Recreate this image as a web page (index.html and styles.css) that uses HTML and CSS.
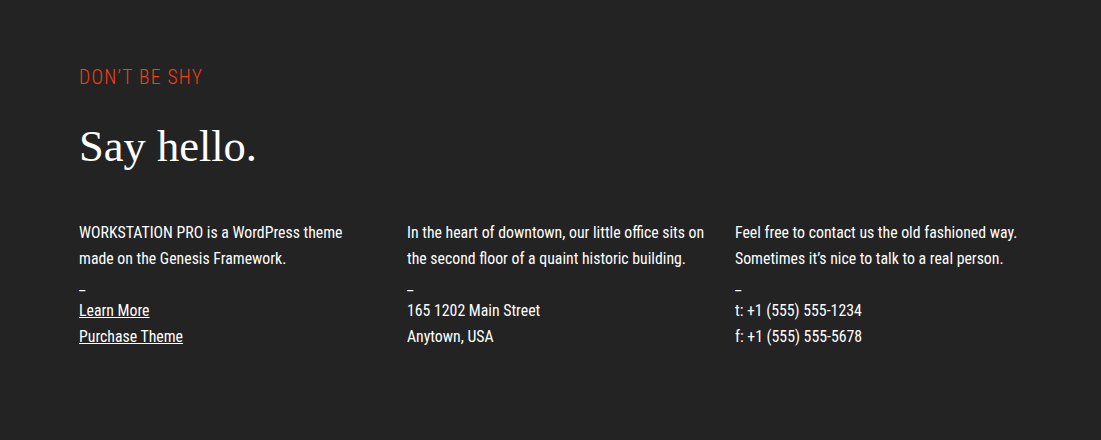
FILE: index.html
```html
<!DOCTYPE html>
<html lang="en">
<head>
<meta charset="utf-8">
<title>Say hello</title>
<link rel="stylesheet" href="styles.css">
</head>
<body>
<section class="contact">
  <p class="eyebrow">Don’t be shy</p>
  <h2 class="title">Say hello.</h2>
  <div class="cols">
    <div class="col">
      <p>WORKSTATION PRO is a WordPress theme made on the Genesis Framework.</p>
      <p>_</p>
      <p><a href="#">Learn More</a><br><a href="#">Purchase Theme</a></p>
    </div>
    <div class="col">
      <p>In the heart of downtown, our little office sits on the second floor of a quaint historic building.</p>
      <p>_</p>
      <p>165 1202 Main Street<br>Anytown, USA</p>
    </div>
    <div class="col">
      <p>Feel free to contact us the old fashioned way. Sometimes it’s nice to talk to a real person.</p>
      <p>_</p>
      <p>t: +1 (555) 555-1234<br>f: +1 (555) 555-5678</p>
    </div>
  </div>
</section>
</body>
</html>
```
FILE: styles.css
```css
html, body {
  margin: 0;
  padding: 0;
  background: #232323;
}
body {
  width: 1101px;
  height: 440px;
  overflow: hidden;
}
.contact {
  padding: 66px 0 0 79px;
  color: #ffffff;
  font-family: "Roboto Condensed", Roboto, "Liberation Sans", sans-serif;
  font-stretch: condensed;
}
.eyebrow {
  margin: 0;
  font-size: 19.5px;
  font-weight: 300;
  line-height: 24px;
  letter-spacing: 1.3px;
  text-transform: uppercase;
  color: #f4401a;
}
.title {
  margin: 28px 0 0;
  font-family: "Liberation Serif", "Times New Roman", serif;
  font-weight: normal;
  font-size: 44.5px;
  line-height: 56px;
  color: #ffffff;
}
.cols {
  margin-top: 46px;
  display: grid;
  grid-template-columns: 301px 301px 301px;
  column-gap: 27px;
}
.col p {
  margin: 0;
  font-size: 15.8px;
  line-height: 26px;
}
.col a {
  color: #ffffff;
  text-decoration: underline;
}
```
